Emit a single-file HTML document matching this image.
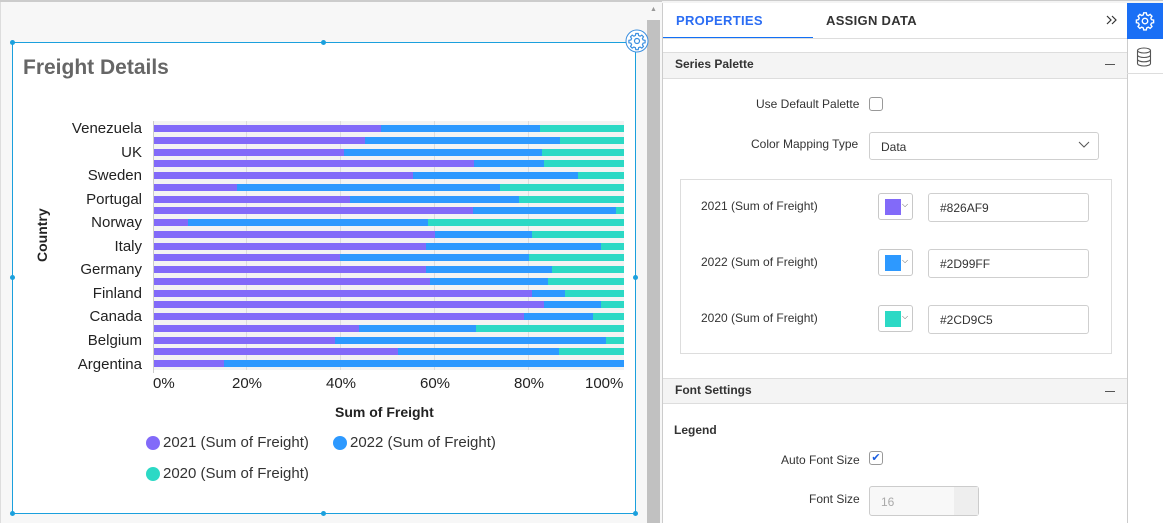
<!DOCTYPE html>
<html><head><meta charset="utf-8"><style>
*{box-sizing:border-box;margin:0;padding:0}
body{width:1163px;height:523px;overflow:hidden;background:#fff;font-family:"Liberation Sans",sans-serif;position:relative}
.a{position:absolute}
.lbl{position:absolute;font-size:15px;color:#222;text-align:right;width:130px;left:12px}
.bar{position:absolute;left:154px;height:7px;width:470px;display:flex}
.bar i{display:block;height:7px}
.p{background:#826AF9}.b{background:#2D99FF}.t{background:#2CD9C5}
.rl{position:absolute;font-size:12px;color:#333}
.sw{position:absolute;width:35px;height:27px;border:1px solid #c8c8c8;border-radius:3px;background:#fff}
.sw i{position:absolute;left:6px;top:5px;width:16px;height:16px}
.sw b{position:absolute;left:23px;top:6px;font-size:8px;color:#555;font-weight:normal}
.in{position:absolute;width:161px;height:29px;border:1px solid #cfcfcf;border-radius:3px;font-size:12px;color:#333;padding:7px 0 0 11px}
</style></head><body>
<div class="a" style="left:0;top:0;width:662px;height:523px;background:#f7f7f7;border-top:2px solid #ccc"></div>
<div class="a" style="left:0;top:2px;width:1px;height:521px;background:#ddd"></div>
<div class="a" style="left:647px;top:20px;width:13px;height:503px;background:#c1c1c1"></div>
<div class="a" style="left:650px;top:6px;font-size:7px;color:#999">▲</div>
<!-- card -->
<div class="a" style="left:12px;top:42px;width:624px;height:472px;background:#fff;border:1px solid #1ba0dd"></div>
<div class="a" style="left:10px;top:40px;width:5px;height:5px;border-radius:50%;background:#1ba0dd"></div>
<div class="a" style="left:321px;top:40px;width:5px;height:5px;border-radius:50%;background:#1ba0dd"></div>
<div class="a" style="left:10px;top:275px;width:5px;height:5px;border-radius:50%;background:#1ba0dd"></div>
<div class="a" style="left:633px;top:275px;width:5px;height:5px;border-radius:50%;background:#1ba0dd"></div>
<div class="a" style="left:10px;top:511px;width:5px;height:5px;border-radius:50%;background:#1ba0dd"></div>
<div class="a" style="left:321px;top:511px;width:5px;height:5px;border-radius:50%;background:#1ba0dd"></div>
<div class="a" style="left:633px;top:511px;width:5px;height:5px;border-radius:50%;background:#1ba0dd"></div>
<svg class="a" style="left:625px;top:29px" width="24" height="24" viewBox="0 0 24 24"><circle cx="12" cy="12" r="11" fill="#fff" stroke="#3b8fe0"/><g fill="none" stroke="#3b8fe0" stroke-width="1.2"><circle cx="12" cy="12" r="2.5"/><path d="M10.8 4.5h2.4l.4 2 1.5.7 1.7-1.1 1.7 1.7-1.1 1.7.7 1.5 2 .4v2.4l-2 .4-.7 1.5 1.1 1.7-1.7 1.7-1.7-1.1-1.5.7-.4 2h-2.4l-.4-2-1.5-.7-1.7 1.1-1.7-1.7 1.1-1.7-.7-1.5-2-.4v-2.4l2-.4.7-1.5-1.1-1.7 1.7-1.7 1.7 1.1 1.5-.7z"/></g></svg>
<div class="a" style="left:23px;top:56px;font-size:21px;font-weight:bold;color:#666">Freight Details</div>
<!-- plot -->
<div class="a" style="left:154px;top:121px;width:470px;height:249px;background:#f3f3f3"></div>
<div class="a" style="left:246px;top:121px;width:1px;height:249px;background:#ddd"></div>
<div class="a" style="left:340px;top:121px;width:1px;height:249px;background:#ddd"></div>
<div class="a" style="left:434px;top:121px;width:1px;height:249px;background:#ddd"></div>
<div class="a" style="left:528px;top:121px;width:1px;height:249px;background:#ddd"></div>
<div id="bars"></div>
<div class="a" style="left:153px;top:121px;width:1px;height:252px;background:#ccc"></div>
<div class="lbl" style="top:120px">Venezuela</div>
<div class="lbl" style="top:144px">UK</div>
<div class="lbl" style="top:167px">Sweden</div>
<div class="lbl" style="top:191px">Portugal</div>
<div class="lbl" style="top:214px">Norway</div>
<div class="lbl" style="top:238px">Italy</div>
<div class="lbl" style="top:261px">Germany</div>
<div class="lbl" style="top:285px">Finland</div>
<div class="lbl" style="top:308px">Canada</div>
<div class="lbl" style="top:332px">Belgium</div>
<div class="lbl" style="top:356px">Argentina</div>
<div class="a" style="left:25px;top:237px;width:34px;font-size:14px;font-weight:bold;color:#222;transform:rotate(-90deg);transform-origin:center;text-align:center">Country</div>
<div class="a" style="top:375px;left:0;width:660px;font-size:15px;color:#222">
<span class="a" style="left:153px">0%</span><span class="a" style="left:232px">20%</span><span class="a" style="left:326px">40%</span><span class="a" style="left:420px">60%</span><span class="a" style="left:514px">80%</span><span class="a" style="left:585px">100%</span></div>
<div class="a" style="left:335px;top:404px;font-size:14px;font-weight:bold;color:#222">Sum of Freight</div>
<div class="a" style="left:146px;top:436px;width:14px;height:14px;border-radius:50%;background:#826AF9"></div>
<div class="a" style="left:163px;top:434px;font-size:15px;color:#333">2021 (Sum of Freight)</div>
<div class="a" style="left:333px;top:436px;width:14px;height:14px;border-radius:50%;background:#2D99FF"></div>
<div class="a" style="left:350px;top:434px;font-size:15px;color:#333">2022 (Sum of Freight)</div>
<div class="a" style="left:146px;top:467px;width:14px;height:14px;border-radius:50%;background:#2CD9C5"></div>
<div class="a" style="left:163px;top:465px;font-size:15px;color:#333">2020 (Sum of Freight)</div>
<!-- right panel -->
<div class="a" style="left:662px;top:3px;width:466px;height:520px;background:#fff;border-left:1px solid #ccc;border-right:1px solid #ccc"></div>
<div class="a" style="left:662px;top:0;width:501px;height:3px;background:#f4f4f4;border-top:1px solid #ccc"></div>
<div class="a" style="left:676px;top:13px;font-size:13px;font-weight:bold;color:#2b6df3;letter-spacing:.3px">PROPERTIES</div>
<div class="a" style="left:826px;top:13px;font-size:13px;font-weight:bold;color:#333;letter-spacing:.3px">ASSIGN DATA</div>
<svg class="a" style="left:1106px;top:15px" width="12" height="10"><path d="M1 1l4 4-4 4M6 1l4 4-4 4" fill="none" stroke="#333" stroke-width="1.2"/></svg>
<div class="a" style="left:663px;top:37px;width:150px;height:2px;background:#1370f5"></div>
<div class="a" style="left:663px;top:38px;width:464px;height:1px;background:#ddd"></div>
<div class="a" style="left:663px;top:52px;width:464px;height:27px;background:#f4f4f4;border-top:1px solid #ddd;border-bottom:1px solid #ddd"></div>
<div class="a" style="left:675px;top:57px;font-size:12px;font-weight:bold;color:#333">Series Palette</div>
<div class="a" style="left:1105px;top:64px;width:10px;height:1px;background:#555"></div>
<div class="rl" style="left:756px;top:97px">Use Default Palette</div>
<div class="a" style="left:869px;top:97px;width:14px;height:14px;border:1px solid #999;border-radius:3px"></div>
<div class="rl" style="left:751px;top:137px">Color Mapping Type</div>
<div class="a" style="left:869px;top:132px;width:230px;height:28px;border:1px solid #cfcfcf;border-radius:3px;font-size:12px;color:#333;padding:7px 0 0 11px">Data</div>
<svg class="a" style="left:1078px;top:141px" width="12" height="8"><path d="M1 1l5 5 5-5" fill="none" stroke="#555"/></svg>
<div class="a" style="left:680px;top:179px;width:432px;height:175px;border:1px solid #ddd"></div>
<div class="rl" style="left:701px;top:199px">2021 (Sum of Freight)</div>
<div class="sw" style="left:878px;top:193px"><i class="p"></i><b>⌵</b></div>
<div class="in" style="left:928px;top:193px">#826AF9</div>
<div class="rl" style="left:701px;top:255px">2022 (Sum of Freight)</div>
<div class="sw" style="left:878px;top:249px"><i class="b"></i><b>⌵</b></div>
<div class="in" style="left:928px;top:249px">#2D99FF</div>
<div class="rl" style="left:701px;top:311px">2020 (Sum of Freight)</div>
<div class="sw" style="left:878px;top:305px"><i class="t"></i><b>⌵</b></div>
<div class="in" style="left:928px;top:305px">#2CD9C5</div>
<div class="a" style="left:663px;top:378px;width:464px;height:26px;background:#f4f4f4;border-top:1px solid #ddd;border-bottom:1px solid #ddd"></div>
<div class="a" style="left:675px;top:383px;font-size:12px;font-weight:bold;color:#333">Font Settings</div>
<div class="a" style="left:1105px;top:391px;width:10px;height:1px;background:#555"></div>
<div class="a" style="left:674px;top:423px;font-size:12px;font-weight:bold;color:#333">Legend</div>
<div class="rl" style="left:781px;top:453px">Auto Font Size</div>
<div class="a" style="left:869px;top:451px;width:14px;height:14px;border:1px solid #999;border-radius:3px;font-size:11px;color:#1a5de0;line-height:12px;text-align:center">✔</div>
<div class="rl" style="left:809px;top:492px">Font Size</div>
<div class="a" style="left:869px;top:486px;width:110px;height:30px;border:1px solid #ccc;border-radius:3px;background:#f8f8f8;font-size:12px;color:#aaa;padding:8px 0 0 11px">16</div>
<div class="a" style="left:954px;top:487px;width:24px;height:28px;background:#eee"></div>
<div class="a" style="left:1127px;top:3px;width:36px;height:36px;background:#1a6ff5"></div>
<svg class="a" style="left:1134px;top:10px" width="22" height="22" viewBox="0 0 24 24"><g fill="none" stroke="#fff" stroke-width="1.5"><circle cx="12" cy="12" r="3"/><path d="M10.6 3h2.8l.5 2.3 1.7.8 2-1.3 2 2-1.3 2 .8 1.7 2.3.5v2.8l-2.3.5-.8 1.7 1.3 2-2 2-2-1.3-1.7.8-.5 2.3h-2.8l-.5-2.3-1.7-.8-2 1.3-2-2 1.3-2-.8-1.7-2.3-.5v-2.8l2.3-.5.8-1.7-1.3-2 2-2 2 1.3 1.7-.8z"/></g></svg>
<svg class="a" style="left:1136px;top:47px" width="16" height="20" viewBox="0 0 16 20"><g fill="none" stroke="#555" stroke-width="1.1"><ellipse cx="8" cy="3.5" rx="6.5" ry="2.5"/><path d="M1.5 3.5v13c0 1.4 2.9 2.5 6.5 2.5s6.5-1.1 6.5-2.5v-13M1.5 8c0 1.4 2.9 2.5 6.5 2.5s6.5-1.1 6.5-2.5M1.5 12.3c0 1.4 2.9 2.5 6.5 2.5s6.5-1.1 6.5-2.5"/></g></svg>
<div class="a" style="left:1127px;top:73px;width:36px;height:1px;background:#ddd"></div>
<script>
var d=[[48.3,82.2],[44.9,86.4],[40.4,82.5],[68.1,83],[55.1,90.2],[17.6,73.7],[41.6,77.6],[67.8,98.4],[7.2,58.2],[59.8,80.4],[57.9,95.1],[39.5,79.7],[57.9,84.7],[58.8,83.9],[80.5,87.4],[82.9,95.1],[78.7,93.5],[43.7,68.5],[38.6,96.1],[51.9,86.1],[14.9,100]];
var h='';d.forEach(function(r,i){var y=125+i*11.75;h+='<div class="bar" style="top:'+y+'px"><i class="p" style="width:'+r[0]+'%"></i><i class="b" style="width:'+(r[1]-r[0])+'%"></i><i class="t" style="width:'+(100-r[1])+'%"></i></div>';});
document.getElementById('bars').innerHTML=h;
</script>
</body></html>
